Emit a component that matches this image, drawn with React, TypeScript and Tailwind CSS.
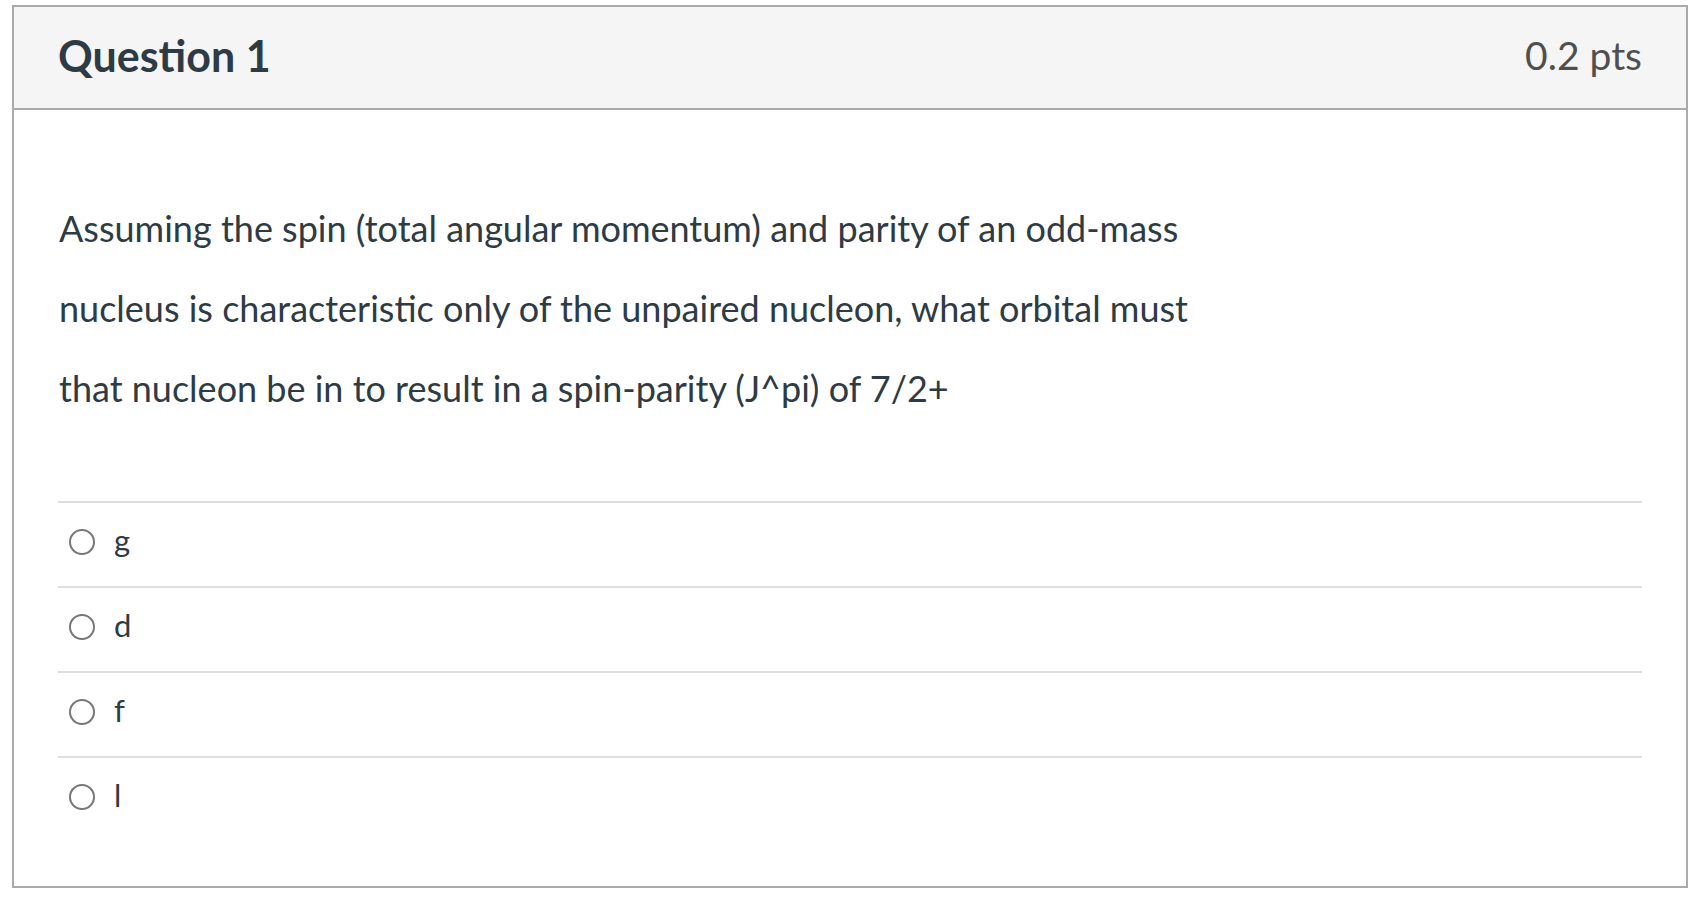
import React from 'react';

const answers = ['g', 'd', 'f', 'l'];

export default function App() {
  return (
    <div className="min-h-screen bg-white pl-[12px] pt-[5px] font-['Lato','Liberation_Sans',sans-serif] text-[#2d3b45]">
      <div className="w-[1676px] h-[883px] border-2 border-[#aaaaaa] flex flex-col">
        <div className="h-[103px] shrink-0 bg-[#f5f5f5] border-b-2 border-[#aaaaaa] flex items-center justify-between px-[44px] pb-[4px]">
          <h2 className="text-[43px] font-bold leading-none">Question 1</h2>
          <div className="text-[39px] leading-none text-[#4f4f4f]">0.2 pts</div>
        </div>

        <div className="flex-1 px-[44px] pt-[78px]">
          <div className="text-[36px] leading-[80px] pl-[1px]">
            <p>Assuming the spin (total angular momentum) and parity of an odd-mass</p>
            <p>nucleus is characteristic only of the unpaired nucleon, what orbital must</p>
            <p>that nucleon be in to result in a spin-parity (J^pi) of 7/2+</p>
          </div>

          <div className="mt-[73px]">
            {answers.map((a) => (
              <label
                key={a}
                className="h-[85px] border-t-2 border-[#dddddd] flex items-center pl-[11px] pb-[5px]"
              >
                <span className="w-[26px] h-[26px] rounded-full border-2 border-[#777777] bg-white shrink-0" />
                <span className="ml-[19px] mb-[4px] text-[31px] leading-none">{a}</span>
              </label>
            ))}
          </div>
        </div>
      </div>
    </div>
  );
}
